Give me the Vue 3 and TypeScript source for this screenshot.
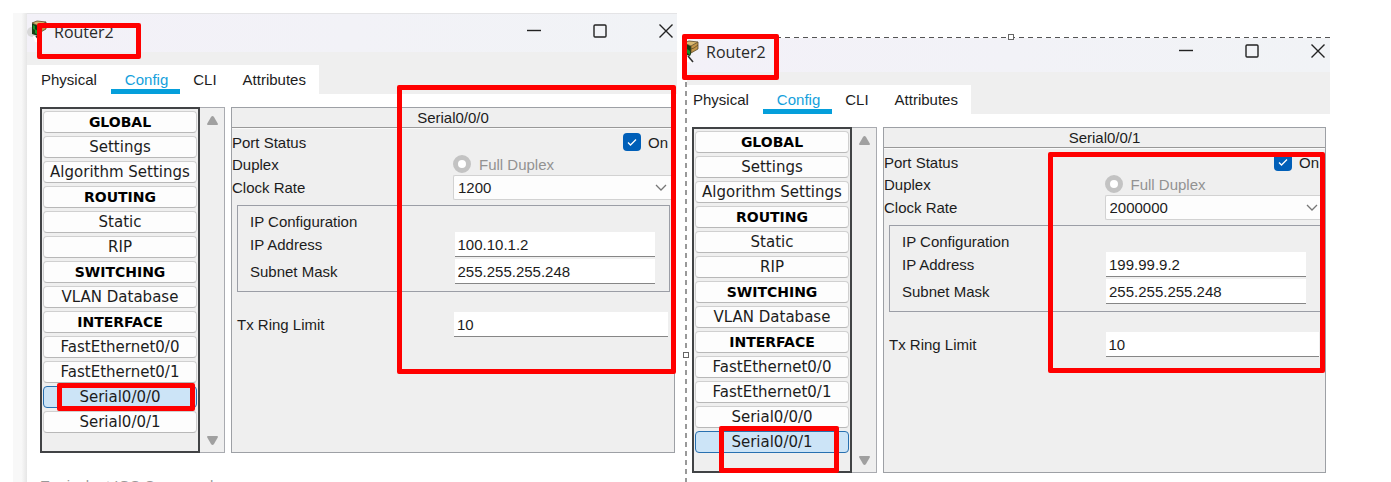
<script setup lang="ts">
import { reactive } from 'vue'

interface RouterWindow {
  id: string
  title: string
  port: string
  clock: string
  ip: string
  mask: string
  ring: string
  enabled: boolean
  footer: string
}

interface MenuItem {
  text: string
  heading?: boolean
}

const windows = reactive<RouterWindow[]>([
  {
    id: 'first',
    title: 'Router2',
    port: 'Serial0/0/0',
    clock: '1200',
    ip: '100.10.1.2',
    mask: '255.255.255.248',
    ring: '10',
    enabled: true,
    footer: 'Equivalent IOS Commands',
  },
  {
    id: 'second',
    title: 'Router2',
    port: 'Serial0/0/1',
    clock: '2000000',
    ip: '199.99.9.2',
    mask: '255.255.255.248',
    ring: '10',
    enabled: true,
    footer: '',
  },
])

const tabs = ['Physical', 'Config', 'CLI', 'Attributes']

const menu: MenuItem[] = [
  { text: 'GLOBAL', heading: true },
  { text: 'Settings' },
  { text: 'Algorithm Settings' },
  { text: 'ROUTING', heading: true },
  { text: 'Static' },
  { text: 'RIP' },
  { text: 'SWITCHING', heading: true },
  { text: 'VLAN Database' },
  { text: 'INTERFACE', heading: true },
  { text: 'FastEthernet0/0' },
  { text: 'FastEthernet0/1' },
  { text: 'Serial0/0/0' },
  { text: 'Serial0/0/1' },
]

const clockRates = ['1200', '2000000']
</script>

<template>
  <main class="page">
    <div class="edge"></div>
    <section v-for="w in windows" :key="w.id" class="window" :class="w.id">
      <header class="titlebar">
        <div class="icon-box">
          <svg class="icon" width="22" height="26" viewBox="0 0 22 26" aria-hidden="true">
            <circle cx="5" cy="12" r="5" fill="#d8d8d8" />
            <path d="M6 16 L9 16 L14 23 L8 22Z" fill="#fff" />
            <path d="M5 3 L12 6 L12 14 L11 16 L5 14Z" fill="#153d15" />
            <path d="M6 5 L8 6 V10 L6 9Z M8 9 L11 11 V15 L8 13Z" fill="#16962a" />
            <path d="M5 3 L10 1 L19 2 L12 6Z" fill="#d9b870" />
            <path d="M12 6 L19 2 V9 L12 13Z" fill="#c39549" />
            <path d="M5 3 L10 1 L19 2 V9 L12 13 V6 L5 3 M12 6 L19 2 M12 9 L15 8 L19 5" fill="none" stroke="#5a4a28" stroke-width="0.8" />
            <path d="M9 16 L14 22" stroke="#333" stroke-width="1.6" />
          </svg>
        </div>
        <h1 class="title">{{ w.title }}</h1>
        <div class="controls">
          <button type="button" aria-label="Minimize">
            <svg width="14" height="14" viewBox="0 0 14 14"><path d="M0 6.5H14" /></svg>
          </button>
          <button type="button" aria-label="Maximize">
            <svg width="14" height="14" viewBox="0 0 14 14"><rect x="1" y="1" width="12" height="12" rx="1" /></svg>
          </button>
          <button type="button" aria-label="Close">
            <svg width="14" height="14" viewBox="0 0 14 14"><path d="M0.5 0.5L13.5 13.5M13.5 0.5L0.5 13.5" /></svg>
          </button>
        </div>
      </header>
      <div class="tabstrip">
        <nav class="tabs">
          <button v-for="t in tabs" :key="t" type="button" class="tab" :class="{ active: t === 'Config' }">{{ t }}</button>
        </nav>
      </div>
      <div class="body">
        <div class="sidebar">
          <nav class="list">
            <button
              v-for="m in menu"
              :key="m.text"
              type="button"
              class="item"
              :class="{ heading: m.heading, selected: m.text === w.port }"
            >{{ m.text }}</button>
          </nav>
          <div class="scroll">
            <svg width="11" height="9" viewBox="0 0 11 9"><path d="M4 1Q5.5 -1 7 1L11 8Q11 9 10 9H1Q0 9 0 8Z" /></svg>
            <svg width="11" height="9" viewBox="0 0 11 9"><path d="M4 8Q5.5 10 7 8L11 1Q11 0 10 0H1Q0 0 0 1Z" /></svg>
          </div>
        </div>
        <form class="panel" @submit.prevent>
          <h2 class="panel-title">{{ w.port }}</h2>
          <div class="row port">
            <span>Port Status</span>
            <label class="check">
              <span class="tick">
                <input v-model="w.enabled" type="checkbox" />
                <svg width="18" height="18" viewBox="0 0 18 18"><path d="M5 9.5L7.5 12L13 6.5" /></svg>
              </span>
              On
            </label>
          </div>
          <div class="row">
            <span>Duplex</span>
            <label class="radio"><input type="radio" :name="w.id + '-duplex'" disabled />Full Duplex</label>
          </div>
          <div class="row clock">
            <label :for="w.id + '-clock'">Clock Rate</label>
            <div class="select">
              <select :id="w.id + '-clock'" v-model="w.clock">
                <option v-for="c in clockRates" :key="c">{{ c }}</option>
              </select>
              <svg width="12" height="8" viewBox="0 0 12 8"><path d="M1 1L6 6L11 1" /></svg>
            </div>
          </div>
          <div class="group" role="group" :aria-labelledby="w.id + '-group'">
            <div :id="w.id + '-group'" class="group-title">IP Configuration</div>
            <div class="row field">
              <label :for="w.id + '-ip'">IP Address</label>
              <input :id="w.id + '-ip'" v-model="w.ip" type="text" />
            </div>
            <div class="row field">
              <label :for="w.id + '-mask'">Subnet Mask</label>
              <input :id="w.id + '-mask'" v-model="w.mask" type="text" />
            </div>
          </div>
          <div class="row field ring">
            <label :for="w.id + '-ring'">Tx Ring Limit</label>
            <input :id="w.id + '-ring'" v-model="w.ring" type="text" />
          </div>
        </form>
      </div>
      <p v-if="w.footer" class="footer">{{ w.footer }}</p>
      <template v-if="w.id === 'second'">
        <div class="dash-h"></div>
        <div class="dash-v"></div>
        <div class="handle top"></div>
        <div class="handle side"></div>
      </template>
      <div class="mark mark-title"></div>
      <div class="mark mark-panel"></div>
      <div class="mark mark-port"></div>
    </section>
  </main>
</template>

<style>
body {
  margin: 0;
  background: #fff;
}
</style>

<style scoped>
.page {
  box-sizing: border-box;
  height: 100vh;
  overflow: hidden;
  display: grid;
  grid-template-columns: 14px 650fr 653fr;
  padding: 0 61px 0 13px;
  font-family: "Liberation Sans", Arial, sans-serif;
  font-size: 15px;
  color: #1c1c1c;
}
.page button,
.page input,
.page select {
  font: inherit;
  color: inherit;
  margin: 0;
  padding: 0;
  border: 0;
  background: none;
}
.edge {
  margin-top: 13px;
  background: linear-gradient(to right, #f8f8f8 60%, #e6e6e6);
}
.window {
  position: relative;
  min-width: 0;
}
.first {
  margin-top: 13px;
}
.second {
  margin-top: 37px;
  margin-left: 9px;
}
.titlebar {
  box-sizing: border-box;
  height: 39px;
  display: flex;
  align-items: flex-start;
  padding: 6px 4px 0 0;
  background: linear-gradient(to right, #f3f1f8, #f1f3f6);
}
.first .titlebar {
  border-top: 1px solid #e4e4e6;
}
.second .titlebar {
  height: 35px;
  padding: 3px 5px 0 0;
}
.icon-box {
  width: 27px;
  height: 26px;
  overflow: hidden;
  display: flex;
}
.second .icon-box {
  width: 20px;
  justify-content: flex-end;
}
.icon {
  flex: none;
  margin-right: 5px;
}
.title {
  margin: 0;
  font: 400 16px/24px "Open Sans", "Noto Sans", sans-serif;
  color: #2a2a2a;
}
.controls {
  margin-left: auto;
  display: flex;
  gap: 52px;
  padding-top: 4px;
}
.controls button {
  display: flex;
}
.controls svg {
  fill: none;
  stroke: #222;
  stroke-width: 1.4;
}
.tabstrip {
  padding-top: 13px;
  background: #efefef;
}
.tabs {
  display: flex;
  width: max-content;
  background: #fff;
}
.page .tab {
  box-sizing: border-box;
  height: 29px;
  padding: 5px 13px 0;
  line-height: 19px;
  border-bottom: 5px solid transparent;
}
.page .tab.active {
  padding: 5px 12px 0 14px;
  color: #159fdc;
  border-color: #059fdb;
}
.page .tab:first-child {
  padding: 5px 14px 0;
}
.second .tab:first-child {
  padding-left: 7px;
}
.body {
  display: flex;
  gap: 6px;
  padding: 13px 2px 0 13px;
}
.second .body {
  padding: 13px 4px 0 6px;
}
.sidebar {
  display: flex;
  flex: none;
}
.list {
  box-sizing: border-box;
  width: 160px;
  display: flex;
  flex-direction: column;
  gap: 3px;
  padding: 2px 1px 18px;
  border: 2px solid #414345;
  background: #efefef;
}
.page .item {
  box-sizing: border-box;
  height: 22px;
  border: 1px solid #d0d0d0;
  border-bottom-color: #b8b8b8;
  border-radius: 4px;
  background: #fdfdfd;
  font: 15px/20px "DejaVu Sans", Verdana, sans-serif;
  white-space: nowrap;
}
.page .item.heading {
  font-size: 14px;
  font-weight: 700;
  color: #000;
}
.page .item.selected {
  background: #cce4f7;
  border-color: #2870b0;
}
.scroll {
  box-sizing: border-box;
  width: 25px;
  display: flex;
  flex-direction: column;
  align-items: center;
  justify-content: space-between;
  padding: 8px 0 7px;
  border: solid #a9abb0;
  border-width: 1px 1px 1px 0;
  background: #efefef;
}
.scroll svg {
  fill: #a0a0a0;
}
.panel {
  box-sizing: border-box;
  flex: 1;
  min-width: 0;
  border: 1px solid #9da0a5;
  background: #efefef;
}
.panel-title {
  margin: 0 0 3px;
  font-size: 15px;
  font-weight: 400;
  line-height: 19px;
  text-align: center;
  border-bottom: 1px solid #999;
  box-shadow: 0 1px #fafafa;
}
.row {
  display: grid;
  grid-template-columns: 1fr 1fr;
  align-items: center;
  height: 22px;
}
.row > * {
  min-width: 0;
}
.clock {
  height: 25px;
}
.check {
  display: flex;
  justify-content: flex-end;
  align-items: center;
  gap: 7px;
  padding-right: 6px;
}
.tick {
  display: grid;
}
.tick > * {
  grid-area: 1 / 1;
}
.tick svg {
  pointer-events: none;
  fill: none;
  stroke: #fff;
  stroke-width: 1.3;
}
.page .tick input {
  appearance: none;
  width: 18px;
  height: 18px;
  border-radius: 4px;
  background: #005fb8;
}
.radio {
  display: flex;
  align-items: center;
  gap: 8px;
  color: #929292;
}
.page .radio input {
  appearance: none;
  box-sizing: border-box;
  width: 18px;
  height: 18px;
  border: 5px solid #c3c3c3;
  border-radius: 50%;
  background: #fff;
}
.select {
  display: grid;
  align-items: center;
}
.select > * {
  grid-area: 1 / 1;
}
.page .select select {
  appearance: none;
  box-sizing: border-box;
  width: 100%;
  height: 25px;
  padding-left: 4px;
  border: 1px solid #d2d2d2;
  border-right: 0;
  border-radius: 2px 0 0 2px;
  background: #fdfdfd;
}
.select svg {
  justify-self: end;
  margin-right: 7px;
  pointer-events: none;
  fill: none;
  stroke: #777;
  stroke-width: 1.3;
}
.group {
  margin: 5px 4px 20px 5px;
  padding: 6px 0 7px;
  border: 1px solid #9b9ea6;
}
.group-title {
  padding-left: 12px;
  line-height: 20px;
}
.field {
  height: 25px;
}
.group .field + .field {
  margin-top: 2px;
}
.field label {
  padding-left: 12px;
}
.page .field input {
  box-sizing: border-box;
  height: 25px;
  margin: 0 14px 0 1px;
  padding-left: 3px;
  border-bottom: 1px solid #868686;
  background: #fff;
}
.ring label {
  padding-left: 5px;
}
.page .ring input {
  margin-right: 6px;
}
.footer {
  margin: 23px 0 0 13px;
  line-height: 20px;
  color: #999;
}
.mark {
  position: absolute;
  box-sizing: border-box;
  border: 5px solid #f00;
  border-radius: 2px;
  pointer-events: none;
}
.first .mark-title {
  left: 10px;
  top: 10px;
  width: 104px;
  height: 36px;
}
.first .mark-panel {
  right: 1px;
  top: 72px;
  width: 279px;
  height: 289px;
}
.first .mark-port {
  left: 30px;
  top: 370px;
  width: 138px;
  height: 28px;
}
.second .mark-title {
  left: -4px;
  top: -3px;
  width: 97px;
  height: 46px;
}
.second .mark-panel {
  right: 5px;
  top: 115px;
  width: 277px;
  height: 221px;
}
.second .mark-port {
  left: 33px;
  top: 389px;
  width: 120px;
  height: 47px;
}
.dash-h {
  position: absolute;
  left: 0;
  right: 0;
  top: 0;
  height: 1px;
  background: repeating-linear-gradient(to right, #555 0 5px, #fff 5px 9px);
}
.dash-v {
  position: absolute;
  left: -1px;
  top: 0;
  width: 2px;
  height: 100vh;
  background: repeating-linear-gradient(to bottom, #999 0 5px, #fff 5px 9px);
}
.handle {
  position: absolute;
  box-sizing: border-box;
  width: 6px;
  height: 6px;
  border: 1px solid #666;
  background: #fff;
}
.handle.top {
  left: 50%;
  top: -3px;
}
.handle.side {
  left: -3px;
  top: 315px;
}
</style>
